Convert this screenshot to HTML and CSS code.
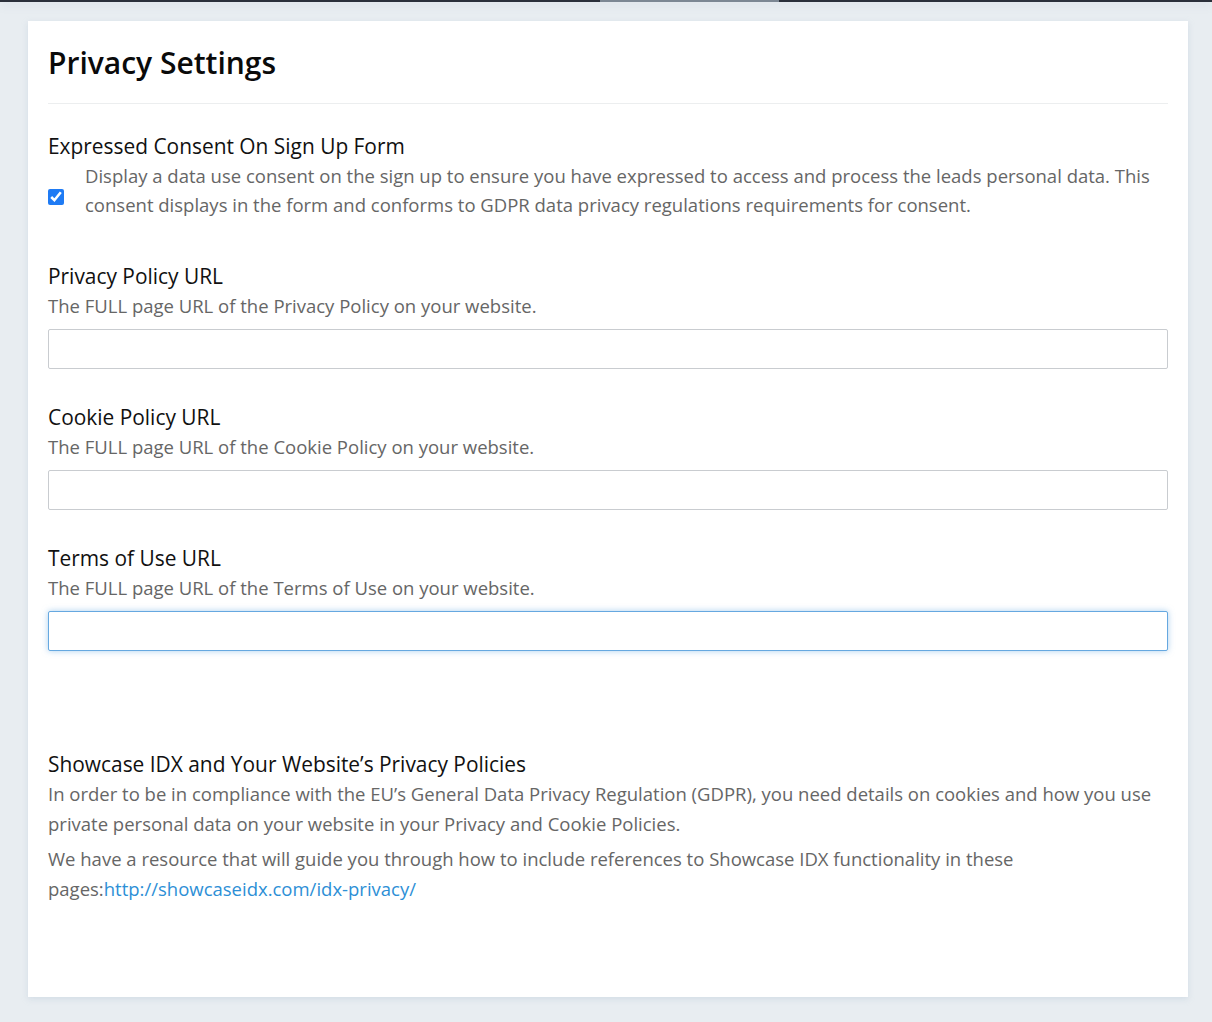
FILE: index.html
```html
<!DOCTYPE html>
<html>
<head>
<meta charset="utf-8">
<link rel="stylesheet" href="styles.css">
</head>
<body>
<div class="topbar"><div class="topbar-tab"></div></div>
<main class="page">
  <section class="card">
    <h1 class="title">Privacy Settings</h1>
    <hr class="divider">
    <div class="field consent">
      <div class="label">Expressed Consent On Sign Up Form</div>
      <label class="check-row">
        <input type="checkbox" class="check" checked>
        <span class="help">Display a data use consent on the sign up to ensure you have expressed to access and process the leads personal data. This consent displays in the form and conforms to GDPR data privacy regulations requirements for consent.</span>
      </label>
    </div>
    <div class="field">
      <div class="label">Privacy Policy URL</div>
      <div class="help">The FULL page URL of the Privacy Policy on your website.</div>
      <input type="text" class="input">
    </div>
    <div class="field">
      <div class="label">Cookie Policy URL</div>
      <div class="help">The FULL page URL of the Cookie Policy on your website.</div>
      <input type="text" class="input">
    </div>
    <div class="field">
      <div class="label">Terms of Use URL</div>
      <div class="help">The FULL page URL of the Terms of Use on your website.</div>
      <input type="text" class="input focused">
    </div>
    <div class="info">
      <div class="label">Showcase IDX and Your Website’s Privacy Policies</div>
      <p class="help para">In order to be in compliance with the EU’s General Data Privacy Regulation (GDPR), you need details on cookies and how you use private personal data on your website in your Privacy and Cookie Policies.</p>
      <p class="help para">We have a resource that will guide you through how to include references to Showcase IDX functionality in these pages:<a class="link" href="#">http://showcaseidx.com/idx-privacy/</a></p>
    </div>
  </section>
</main>
</body>
</html>
```
FILE: styles.css
```css
html, body {
  margin: 0;
  padding: 0;
}
body {
  background: #e8edf1;
  font-family: "Open Sans", Lato, sans-serif;
  color: #111;
  height: 1022px;
  overflow: hidden;
}
.topbar {
  height: 2px;
  background: #2b303a;
  position: relative;
  box-shadow: 0 2px 10px rgba(120, 140, 160, 0.25);
}
.topbar-tab {
  position: absolute;
  left: 600px;
  width: 179px;
  top: 0;
  height: 2px;
  background: #7c8793;
}
.page {
  padding: 19px 24px 0 28px;
}
.card {
  background: #fff;
  width: 1160px;
  height: 976px;
  box-sizing: border-box;
  padding: 20px 20px;
  box-shadow: 0 2px 6px rgba(170, 190, 210, 0.35);
}
.title {
  margin: 0;
  font-size: 30px;
  font-weight: 600;
  line-height: 44px;
  color: #0a0a0a;
}
.divider {
  border: 0;
  border-top: 1px solid #eceeef;
  margin: 18px 0 28px;
}
.label {
  font-size: 20.9px;
  line-height: 28px;
  color: #111;
}
.help {
  font-size: 18.5px;
  line-height: 29px;
  color: #666;
}
.field .label + .help {
  margin-top: 1px;
}
.check-row {
  display: flex;
  align-items: center;
  gap: 21px;
  margin-top: 1px;
}
.check {
  width: 16px;
  height: 16px;
  margin: 14px 0 0;
  flex: none;
  accent-color: #1f7bf4;
}
.field {
  margin-bottom: 34px;
}
.consent {
  margin-bottom: 43px;
}
.input {
  display: block;
  box-sizing: border-box;
  width: 100%;
  height: 40px;
  margin-top: 9px;
  border: 1px solid #c9ccd0;
  border-radius: 2px;
  background: #fff;
  font: inherit;
  outline: none;
}
.input.focused {
  border-color: #66a8e0;
  box-shadow: 0 0 6px rgba(102, 168, 224, 0.55);
}
.info {
  margin-top: 99px;
}
.info .help {
  line-height: 30px;
}
.para {
  margin: 0;
}
.info .label + .para {
  margin-top: 1px;
}
.para + .para {
  margin-top: 5px;
}
.link {
  color: #2d8fd6;
  text-decoration: none;
}
```
